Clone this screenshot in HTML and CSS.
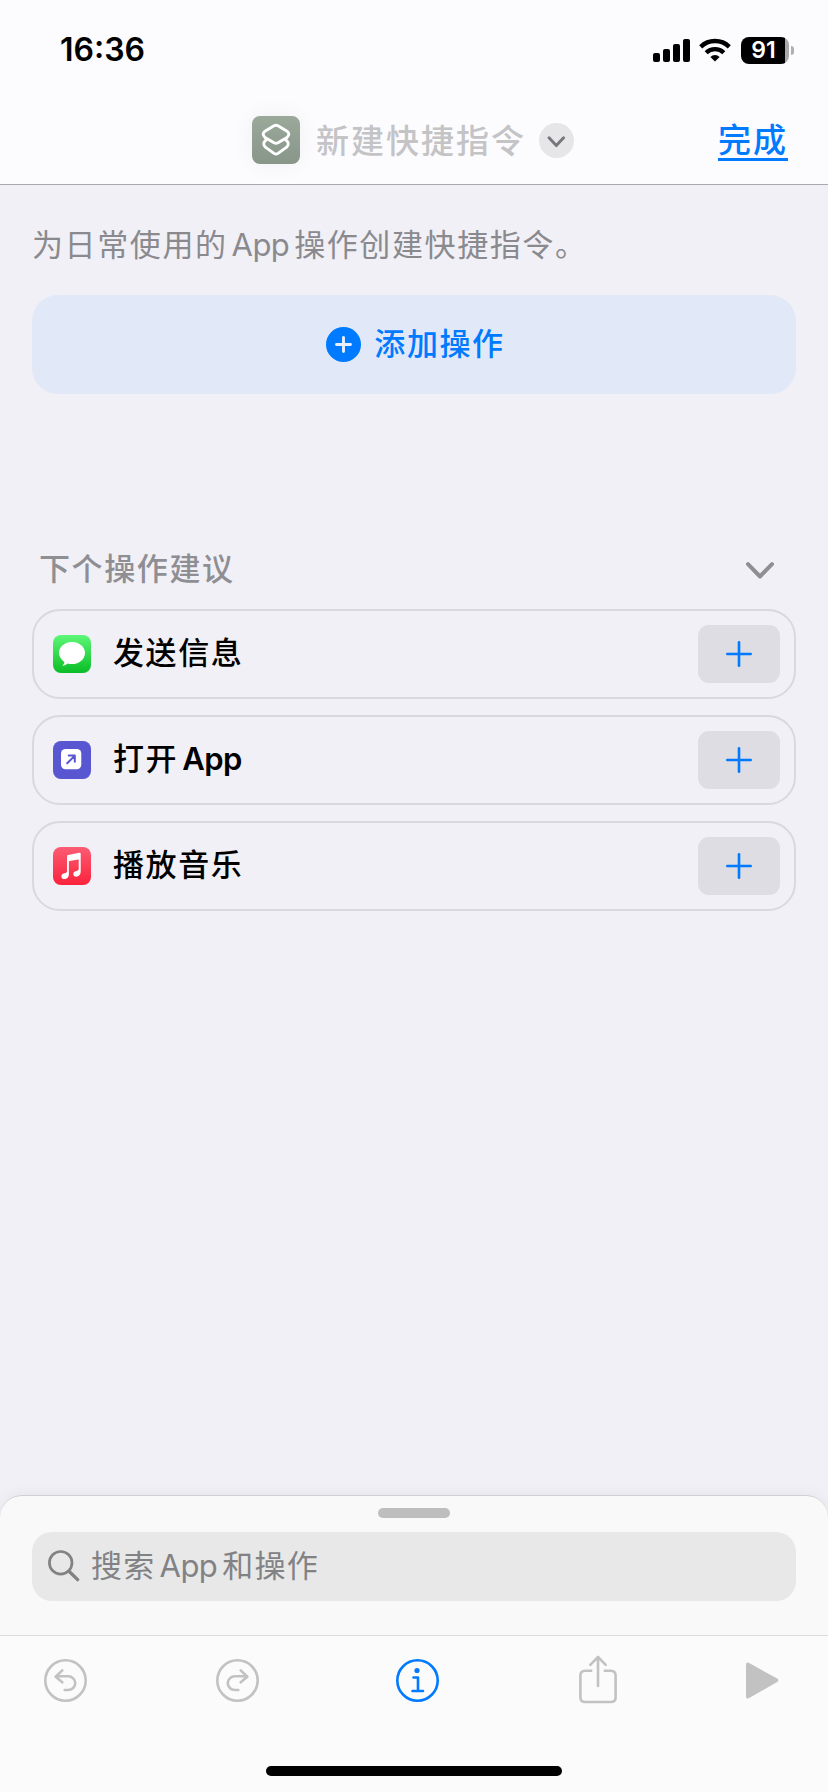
FILE: index.html
```html
<!DOCTYPE html>
<html lang="zh-CN">
<head>
  <meta charset="utf-8">
  <title>新建快捷指令</title>
  <link rel="stylesheet" href="styles.css">
</head>

<body>
  <div class="screen">
    <header class="header">
      <div class="status-bar">
        <div class="time">16:36</div>
        <div class="status-icons">
          <svg class="signal" width="37" height="23" viewBox="0 0 37 23">
            <rect x="0" y="14" width="7" height="9" rx="2"/>
            <rect x="10" y="10" width="7" height="13" rx="2"/>
            <rect x="20" y="5" width="7" height="18" rx="2"/>
            <rect x="30" y="0" width="7" height="23" rx="2"/>
          </svg>
          <svg class="wifi" width="32" height="24" viewBox="0 0 32 24">
            <g fill="none" stroke="#000" stroke-width="4.4">
              <path d="M1.7 8.8a20.600 20.600 0 0 1 28.600 0"/>
              <path d="M7.200 14.700a12.600 12.600 0 0 1 17.600 0"/>
            </g>
            <path d="M16 23.500l-4.600-4.600a6.600 6.600 0 0 1 9.200 0z"/>
          </svg>
          <div class="battery"><span>91</span></div>
          <div class="battery-tip"></div>
        </div>
      </div>
      <div class="nav">
        <div class="nav-icon">
          <svg width="48" height="48" viewBox="0 0 48 48" fill="none" stroke="#fff" stroke-width="2.9" stroke-linejoin="round">
            <path d="M22 9.800q2-1 4 0l9 5.400q3.600 3 0 6.200l-9 5.400q-2 1-4 0l-9-5.400q-3.600-3.200 0-6.200z"/>
            <path d="M15 23.200q-5.400 3.600-2 7.600l9 6.600q2 1.300 4 0l9-6.600q3.400-4-2-7.600"/>
          </svg>
        </div>
        <div class="nav-title">新建快捷指令</div>
        <div class="nav-more">
          <svg width="35" height="35" viewBox="0 0 35 35" fill="none" stroke="#77777b" stroke-width="2.9" stroke-linecap="round" stroke-linejoin="round">
            <path d="M10 14.800l7.300 7.800 7.300-7.800"/>
          </svg>
        </div>
        <a class="done">完成</a>
      </div>
    </header>

    <main class="content">
      <p class="hint">为日常使用的<span class="latin">App</span>操作创建快捷指令。</p>
      <div class="add-action">
        <svg width="35" height="35" viewBox="0 0 35 35">
          <circle cx="17.500" cy="17.500" r="17.500" fill="#007aff"/>
          <path d="M17.500 10.500v14M10.500 17.500h14" stroke="#e9f0fb" stroke-width="2.900" stroke-linecap="round"/>
        </svg>
        <span>添加操作</span>
      </div>

      <div class="section-head">
        <span>下个操作建议</span>
        <svg width="28" height="17" viewBox="0 0 28 17" fill="none" stroke="#8e8e93" stroke-width="4" stroke-linecap="round" stroke-linejoin="round">
          <path d="M2 2.200l12 12.300 12-12.300"/>
        </svg>
      </div>

      <div class="suggestions">
        <div class="row">
          <svg class="app-icon" width="38" height="38" viewBox="0 0 38 38">
            <defs>
              <linearGradient id="green" x1="0" y1="0" x2="0" y2="1">
                <stop offset="0" stop-color="#5df777"/>
                <stop offset="1" stop-color="#0abd27"/>
              </linearGradient>
            </defs>
            <rect width="38" height="38" rx="8" fill="url(#green)"/>
            <path d="M19 6.900c7.400 0 13 4.900 13 11.100s-5.600 11.100-13 11.100c-1.600 0-3-.2-4.300-.6-1.400 1.300-3.200 2-5.300 2.200 1.200-1 1.900-2.100 2-3.600C8 24.200 6 21.300 6 18c0-6.200 5.600-11.100 13-11.100z" fill="#fff"/>
          </svg>
          <span class="label">发送信息</span>
          <div class="plus">
            <svg width="26" height="26" viewBox="0 0 26 26"><path d="M13 1.300v23.400M1.300 13h23.400"/></svg>
          </div>
        </div>
        <div class="row">
          <svg class="app-icon" width="38" height="38" viewBox="0 0 38 38">
            <rect width="38" height="38" rx="8" fill="#5856d0"/>
            <rect x="8" y="8" width="20.300" height="20.300" rx="4.500" fill="#fff"/>
            <path d="M14.200 22.300l7.400-7.400M15.700 14.600h6.100v6.100" fill="none" stroke="#5856d0" stroke-width="2" stroke-linecap="round" stroke-linejoin="round"/>
          </svg>
          <span class="label">打开<span class="latin latin-end">App</span></span>
          <div class="plus">
            <svg width="26" height="26" viewBox="0 0 26 26"><path d="M13 1.300v23.400M1.300 13h23.400"/></svg>
          </div>
        </div>
        <div class="row">
          <svg class="app-icon" width="38" height="38" viewBox="0 0 38 38">
            <defs>
              <linearGradient id="red" x1="0" y1="0" x2="0" y2="1">
                <stop offset="0" stop-color="#fb5c74"/>
                <stop offset="1" stop-color="#fa233b"/>
              </linearGradient>
            </defs>
            <rect width="38" height="38" rx="8" fill="url(#red)"/>
            <path d="M14 9.300q0-1 1-1.200l11.300-2.300q1.400-.2 1.400 1v18c0 3-2 4.900-4.500 4.900-1.700 0-2.900-1.100-2.900-2.700 0-1.700 1.100-2.700 2.900-3.100l1.500-.4q1-.3 1-1.200v-9.200q0-.8-.9-.6l-8.100 1.600q-.8.200-.8 1v12c0 3-2 5-4.600 5-1.700 0-2.900-1.100-2.900-2.700 0-1.700 1.100-2.700 2.900-3.100l1.500-.4q1.200-.3 1.200-1.300z" fill="#fff"/>
          </svg>
          <span class="label">播放音乐</span>
          <div class="plus">
            <svg width="26" height="26" viewBox="0 0 26 26"><path d="M13 1.300v23.400M1.300 13h23.400"/></svg>
          </div>
        </div>
      </div>
    </main>

    <section class="sheet">
      <div class="handle"></div>
      <div class="search">
        <svg width="32" height="32" viewBox="0 0 32 32" fill="none" stroke="#828285" stroke-linecap="round">
          <circle cx="12.700" cy="12.800" r="11.300" stroke-width="2.700"/>
          <path d="M21 21.200l8.600 8.400" stroke-width="3.400"/>
        </svg>
        <span class="placeholder">搜索<span class="latin">App</span>和操作</span>
      </div>
      <div class="toolbar">
        <svg class="undo" width="43" height="43" viewBox="0 0 43 43">
          <circle cx="21.500" cy="21.500" r="20.200"/>
          <path d="M18.300 11.400l-6.700 6.300 6.700 5.600M12 17.300h12.200a6.900 6.700 0 0 1 0 13.700h-3.500"/>
        </svg>
        <svg class="redo" width="43" height="43" viewBox="0 0 43 43">
          <circle cx="21.500" cy="21.500" r="20.200"/>
          <path d="M24.700 11.400l6.700 6.300-6.700 5.600M31 17.300H18.800a6.900 6.700 0 0 0 0 13.700h3.500"/>
        </svg>
        <svg class="info" width="43" height="43" viewBox="0 0 43 43">
          <circle cx="21.500" cy="21.500" r="20.200"/>
          <path d="M17.500 18.500h4.500v13.500M16.500 32h10.500"/>
          <circle class="dot" cx="21" cy="11.500" r="2.600"/>
        </svg>
        <svg class="share" width="38" height="49" viewBox="0 0 38 49">
          <path d="M13.300 15.800H6.200q-4.800 0-4.800 4.800v21.600q0 4.800 4.800 4.800h25.600q4.800 0 4.800-4.800V20.600q0-4.800-4.800-4.800h-7.100" stroke-linecap="butt"/>
          <path d="M19 31V2M11.300 9.800L19 2l7.700 7.800"/>
        </svg>
        <svg class="play" width="33" height="37" viewBox="0 0 33 37">
          <path d="M0 2.500Q0-.5 3.200 1l28 15.600q2.300 1.700 0 3.400L3.200 36Q0 37.500 0 34.500z"/>
        </svg>
      </div>
      <div class="home-bar"></div>
    </section>
  </div>
</body>
</html>
```
FILE: styles.css
```css
* {
  box-sizing: border-box;
}

body {
  margin: 0;
  background: #f1f0f6;
  font-family: Inter, "Noto Sans CJK SC", sans-serif;
  font-size: 31px;
  line-height: 40px;
}

svg {
  display: block;
  flex: none;
}

.screen {
  width: 828px;
  height: 1792px;
  display: flex;
  flex-direction: column;
  overflow: hidden;
}

/* header */
.header {
  height: 185px;
  background: #fcfcfe;
  border-bottom: 1px solid #a9a9ae;
}

.status-bar {
  height: 100px;
  padding: 0 34px 0 60px;
  display: flex;
  justify-content: space-between;
  align-items: center;
}

.time {
  font-size: 32px;
  font-weight: 600;
}

.status-icons {
  display: flex;
  align-items: center;
}

.wifi {
  margin-left: 9px;
}

.battery {
  width: 48px;
  height: 27px;
  margin-left: 10px;
  padding-right: 3px;
  border-radius: 8px;
  background: linear-gradient(to right, #000 44px, #a9a9ab 44px);
  color: #fff;
  font-size: 23px;
  font-weight: 600;
  line-height: 27px;
  text-align: center;
}

.battery-tip {
  width: 3px;
  height: 9px;
  margin-left: 2px;
  border-radius: 0 4px 4px 0;
  background: #b0b0b2;
}

.nav {
  height: 80px;
  padding: 0 38px 0 252px;
  display: flex;
  align-items: center;
}

.nav-icon {
  width: 48px;
  height: 48px;
  border-radius: 8px;
  background: linear-gradient(#9ba99b, #88968a);
  box-shadow: 0 0 24px rgba(0, 0, 0, 0.05);
}

.nav-title {
  margin-left: 16px;
  padding-top: 1px;
  color: #c4c4c6;
  font-size: 33px;
  font-weight: 500;
  letter-spacing: 2px;
}

.nav-more {
  margin-left: 13px;
  border-radius: 50%;
  background: #e6e6e8;
}

.done {
  margin: 3px 2px 0 auto;
  border-bottom: 3px solid #007aff;
  color: #007aff;
  font-size: 33px;
  font-weight: 500;
  letter-spacing: 2px;
  line-height: 36px;
}

/* content */
.content {
  flex: 1;
  padding: 40px 32px 0;
}

.hint {
  margin: 0;
  color: #8a8a8e;
  letter-spacing: 1.6px;
}

.latin {
  margin: 0 5px 0 4px;
  font-size: 31px;
  font-weight: 400;
  letter-spacing: -0.6px;
}

.add-action {
  height: 99px;
  margin-top: 30px;
  padding-left: 3px;
  border-radius: 26px;
  background: #e1e8f7;
  color: #007aff;
  display: flex;
  justify-content: center;
  align-items: center;
  gap: 13px;
  font-weight: 500;
  letter-spacing: 1.6px;
}

.add-action span {
  padding-bottom: 1px;
}

.section-head {
  margin-top: 155px;
  padding: 0 22px 0 7px;
  display: flex;
  justify-content: space-between;
  align-items: center;
  color: #8e8e93;
  font-weight: 500;
  letter-spacing: 1.6px;
}

.section-head svg {
  margin-top: 3px;
}

.suggestions {
  margin-top: 20px;
  display: flex;
  flex-direction: column;
  gap: 16px;
}

.row {
  height: 90px;
  padding: 0 14px 0 19px;
  border: 2px solid #d9d8de;
  border-radius: 28px;
  display: flex;
  align-items: center;
}

.label {
  margin-left: 22px;
  padding-bottom: 2px;
  font-weight: 500;
  letter-spacing: 1.6px;
}

.latin-end {
  font-weight: 600;
}

.plus {
  width: 82px;
  height: 58px;
  margin-left: auto;
  border-radius: 11px;
  background: #dddde3;
  display: flex;
  justify-content: center;
  align-items: center;
}

.plus path {
  stroke: #007aff;
  stroke-width: 2.6;
  stroke-linecap: round;
}

/* bottom sheet */
.sheet {
  height: 297px;
  border-top: 1px solid #d0d0d4;
  border-radius: 22px 22px 0 0;
  background: linear-gradient(#f9f9f9 140px, #fbfbfb 140px);
  box-shadow: 0 0 16px rgba(0, 0, 0, 0.06);
  display: flex;
  flex-direction: column;
}

.handle {
  width: 72px;
  height: 10px;
  margin: 12px auto 0;
  border-radius: 5px;
  background: #bebebe;
}

.search {
  height: 69px;
  margin: 14px 32px 0;
  padding-left: 16px;
  border-radius: 20px;
  background: #e8e8e8;
  display: flex;
  align-items: center;
  gap: 11px;
  color: #828285;
  letter-spacing: 1.3px;
}

.search svg,
.placeholder {
  margin-bottom: 2px;
}

.toolbar {
  height: 131px;
  margin-top: 34px;
  padding: 19px 0 0 44px;
  border-top: 1px solid #dcdcdd;
  display: flex;
  align-items: flex-start;
}

.toolbar svg {
  fill: none;
  stroke: #c2c2c2;
  stroke-width: 2.6;
  stroke-linecap: round;
  stroke-linejoin: round;
}

.undo,
.redo,
.info {
  margin-top: 4px;
}

.redo {
  margin-left: 129px;
}

.info {
  margin-left: 137px;
}

.toolbar .info {
  stroke: #007aff;
}

.info .dot {
  fill: #007aff;
  stroke: none;
}

.share {
  margin-left: 140px;
}

.toolbar .play {
  margin: 7px 0 0 129px;
  fill: #c2c2c2;
  stroke: none;
}

.home-bar {
  width: 296px;
  height: 10px;
  margin: 0 auto;
  border-radius: 5px;
  background: #000;
}
```
